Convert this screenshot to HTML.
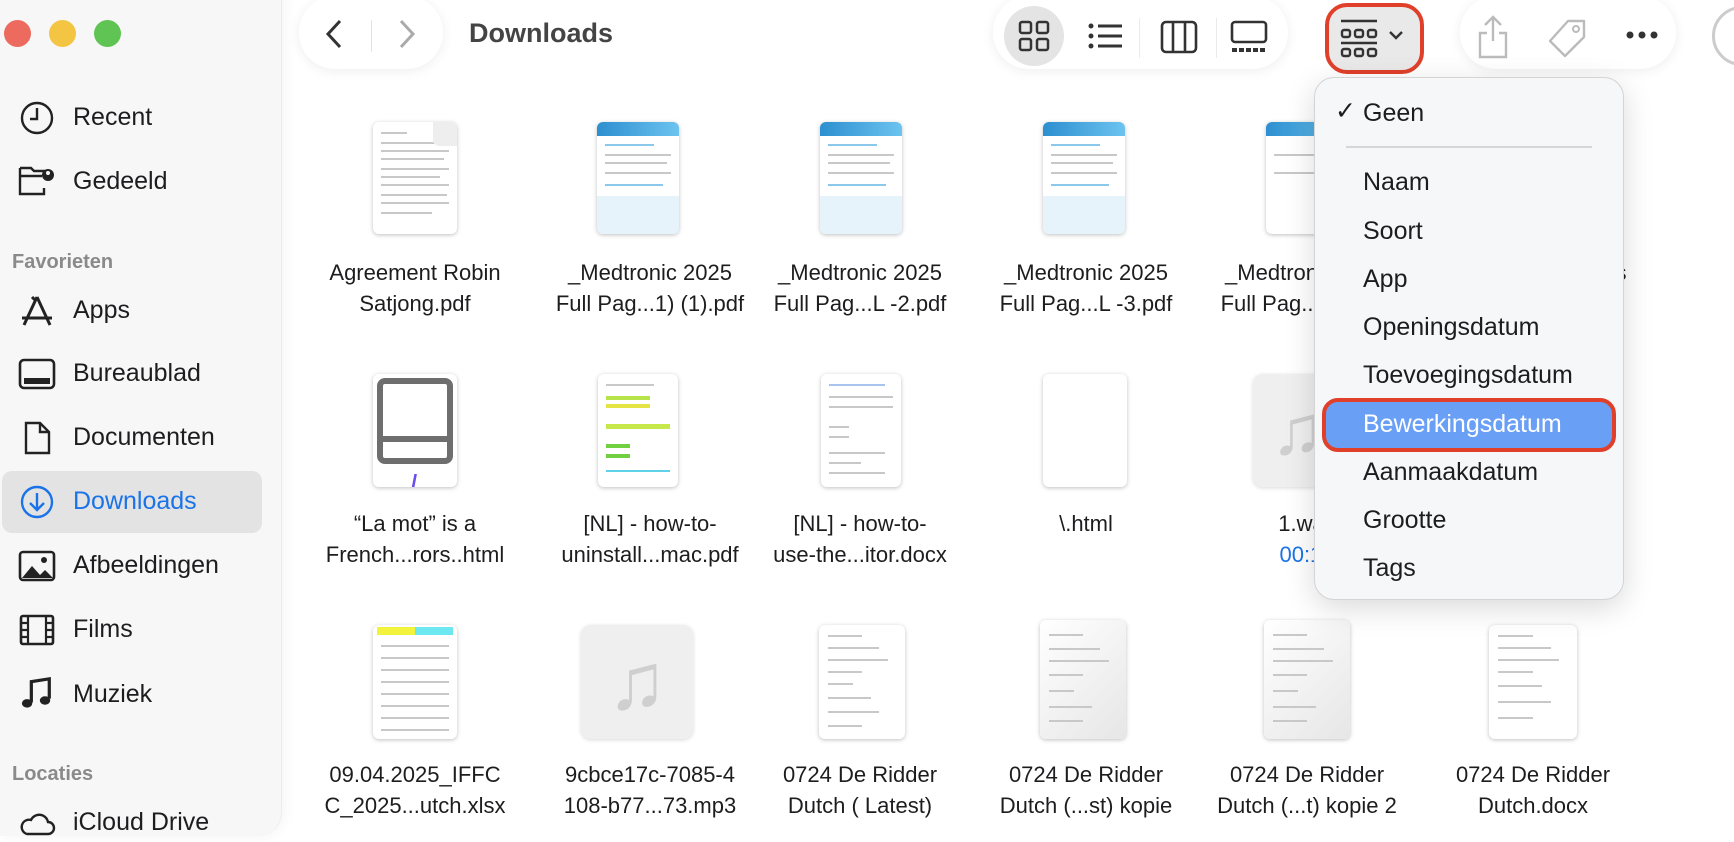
<!DOCTYPE html>
<html><head><meta charset="utf-8"><style>
*{margin:0;padding:0;box-sizing:border-box}
body{width:1734px;height:842px;overflow:hidden;background:#fff;font-family:"Liberation Sans",sans-serif;position:relative;color:#1d1d1f}
.abs{position:absolute}
#side{left:0;top:-20px;width:282px;height:856px;background:#f7f7f7;border-right:1px solid #ececec;border-radius:0 0 24px 0;box-shadow:2px 0 14px rgba(0,0,0,.05)}
#side>*{margin-top:20px}
.tl{position:absolute;top:20px;width:27px;height:27px;border-radius:50%}
.si{position:absolute;left:73px;font-size:25px;color:#1d1d1f}
.sic{position:absolute;left:18px;width:38px;height:34px}
.hd{position:absolute;left:12px;font-size:20px;color:#8a8a8a;font-weight:bold}
.pill{position:absolute;background:#fff;border-radius:36px;box-shadow:0 2px 12px rgba(0,0,0,.07)}
.lbl{position:absolute;width:220px;text-align:center;font-size:22px;line-height:31px;color:#1d1d1f;white-space:nowrap}
.doc{position:absolute;background:#fff;border-radius:6px;box-shadow:0 1px 4px rgba(0,0,0,.25);overflow:hidden}
.ln{position:absolute;left:10%;height:2px;background:#c8c8c8}
.med .hdr{position:absolute;left:0;top:0;right:0;height:14px;background:linear-gradient(90deg,#2d8fd0,#6cc3ef)}
.mus{position:absolute;background:#efefef;border-radius:10px;box-shadow:0 1px 4px rgba(0,0,0,.15);color:#cfcfcf;text-align:center}
#menu{left:1314px;top:77px;width:310px;height:523px;background:#f6f7f9;border:1px solid #d4d4d4;border-radius:20px;box-shadow:0 8px 30px rgba(0,0,0,.15)}
.mi{position:absolute;left:48px;font-size:25px;color:#1d1d1f}
</style></head><body>

<div id="side" class="abs">
 <div class="tl" style="left:4px;background:#ec6a5e"></div>
 <div class="tl" style="left:49px;background:#f4c542"></div>
 <div class="tl" style="left:94px;background:#5fc454"></div>

 <svg class="sic" style="top:101px" viewBox="0 0 38 34"><circle cx="19" cy="17" r="15" fill="none" stroke="#222" stroke-width="2.4"/><path d="M19 7v11h-7" fill="none" stroke="#222" stroke-width="2.4"/></svg>
 <div class="si" style="top:103px">Recent</div>
 <svg class="sic" style="top:164px" viewBox="0 0 38 34"><path d="M2 4h11l3 3h10v4M2 4v26h24v-6M2 12h22" fill="none" stroke="#222" stroke-width="2.4"/><circle cx="30" cy="11" r="6" fill="#222"/><circle cx="30" cy="9" r="2" fill="#f6f6f6"/></svg>
 <div class="si" style="top:167px">Gedeeld</div>
 <div class="hd" style="top:251px">Favorieten</div>
 <svg class="sic" style="top:294px" viewBox="0 0 38 34"><path d="M19 3l-13 28M19 3l13 28M4 24h30M14 3l4 4" fill="none" stroke="#222" stroke-width="3"/></svg>
 <div class="si" style="top:296px">Apps</div>
 <svg class="sic" style="top:357px" viewBox="0 0 38 34"><rect x="2" y="3" width="34" height="28" rx="4" fill="none" stroke="#222" stroke-width="2.6"/><rect x="6" y="21" width="26" height="6" fill="#222"/></svg>
 <div class="si" style="top:359px">Bureaublad</div>
 <svg class="sic" style="top:421px" viewBox="0 0 38 34"><path d="M8 2h14l9 9v21H8z M22 2v9h9" fill="none" stroke="#222" stroke-width="2.4"/></svg>
 <div class="si" style="top:423px">Documenten</div>
 <div class="abs" style="left:2px;top:471px;width:260px;height:62px;background:#e3e3e3;border-radius:10px"></div>
 <svg class="sic" style="top:485px" viewBox="0 0 38 34"><circle cx="19" cy="17" r="15" fill="none" stroke="#1a73e8" stroke-width="2.4"/><path d="M19 8v17M12 18l7 7 7-7" fill="none" stroke="#1a73e8" stroke-width="2.4"/></svg>
 <div class="si" style="top:487px;color:#1a73e8">Downloads</div>
 <svg class="sic" style="top:549px" viewBox="0 0 38 34"><rect x="2" y="3" width="34" height="28" rx="3" fill="none" stroke="#222" stroke-width="2.6"/><path d="M4 29l10-12 8 9 5-5 8 8z" fill="#222"/><circle cx="26" cy="11" r="3" fill="#222"/></svg>
 <div class="si" style="top:551px">Afbeeldingen</div>
 <svg class="sic" style="top:613px" viewBox="0 0 38 34"><rect x="3" y="3" width="32" height="28" rx="2" fill="none" stroke="#222" stroke-width="2.6"/><path d="M10 3v28M28 3v28M3 10h7M3 17h7M3 24h7M28 10h7M28 17h7M28 24h7" stroke="#222" stroke-width="2.2"/></svg>
 <div class="si" style="top:615px">Films</div>
 <svg class="sic" style="top:676px" viewBox="0 0 38 36"><path d="M13 28V6l19-3v21" fill="none" stroke="#222" stroke-width="3.4"/><ellipse cx="8.5" cy="29" rx="5.5" ry="4.5" fill="#222"/><ellipse cx="27.5" cy="26" rx="5.5" ry="4.5" fill="#222"/></svg>
 <div class="si" style="top:680px">Muziek</div>
 <div class="hd" style="top:763px">Locaties</div>
 <svg class="sic" style="top:806px" viewBox="0 0 38 34"><path d="M9 28h21a6 6 0 0 0 0-12 9 9 0 0 0-17-2 7 7 0 0 0-4 14z" fill="none" stroke="#222" stroke-width="2.4"/></svg>
 <div class="si" style="top:808px">iCloud Drive</div>
</div>

<!-- toolbar -->
<div class="pill" style="left:299px;top:-4px;width:144px;height:73px"></div>
<svg class="abs" style="left:322px;top:18px" width="24" height="32"><path d="M18 3L6 16l12 13" fill="none" stroke="#333" stroke-width="3"/></svg>
<div class="abs" style="left:371px;top:20px;width:1px;height:32px;background:#e2e2e2"></div>
<svg class="abs" style="left:395px;top:18px" width="24" height="32"><path d="M6 3l12 13L6 29" fill="none" stroke="#aaa" stroke-width="3"/></svg>
<div class="abs" style="left:469px;top:18px;font-size:27px;font-weight:bold;color:#444">Downloads</div>

<div class="pill" style="left:993px;top:-4px;width:295px;height:73px"></div>
<div class="abs" style="left:1004px;top:6px;width:60px;height:60px;border-radius:50%;background:#e4e4e4"></div>
<svg class="abs" style="left:1018px;top:20px" width="32" height="32"><g fill="none" stroke="#333" stroke-width="2.5"><rect x="2" y="2" width="11" height="11" rx="2"/><rect x="19" y="2" width="11" height="11" rx="2"/><rect x="2" y="19" width="11" height="11" rx="2"/><rect x="19" y="19" width="11" height="11" rx="2"/></g></svg>
<svg class="abs" style="left:1088px;top:22px" width="36" height="30"><g fill="#333"><circle cx="3" cy="4" r="2.5"/><circle cx="3" cy="14" r="2.5"/><circle cx="3" cy="24" r="2.5"/><rect x="10" y="2.5" width="24" height="3"/><rect x="10" y="12.5" width="24" height="3"/><rect x="10" y="22.5" width="24" height="3"/></g></svg>
<div class="abs" style="left:1139px;top:18px;width:1px;height:40px;background:#eaeaea"></div>
<svg class="abs" style="left:1160px;top:20px" width="38" height="34"><g fill="none" stroke="#333" stroke-width="2.6"><rect x="2" y="2" width="34" height="30" rx="4"/><path d="M13 2v30M25 2v30"/></g></svg>
<div class="abs" style="left:1216px;top:18px;width:1px;height:40px;background:#eaeaea"></div>
<svg class="abs" style="left:1230px;top:20px" width="40" height="36"><g fill="none" stroke="#333" stroke-width="2.6"><rect x="2" y="2" width="34" height="20" rx="3"/></g><g fill="#333"><rect x="2" y="28" width="5" height="4"/><rect x="9" y="28" width="5" height="4"/><rect x="16" y="28" width="5" height="4"/><rect x="23" y="28" width="5" height="4"/><rect x="30" y="28" width="5" height="4"/></g></svg>

<div class="abs" style="left:1325px;top:3px;width:99px;height:71px;border-radius:22px;border:4px solid #e0402a;background:#e9e9e9"></div>
<svg class="abs" style="left:1340px;top:18px" width="40" height="44"><g fill="none" stroke="#333" stroke-width="2.4"><path d="M1 3h36"/><rect x="2" y="12" width="8" height="7" rx="2"/><rect x="15" y="12" width="8" height="7" rx="2"/><rect x="28" y="12" width="8" height="7" rx="2"/><path d="M1 25h36"/><rect x="2" y="31" width="8" height="7" rx="2"/><rect x="15" y="31" width="8" height="7" rx="2"/><rect x="28" y="31" width="8" height="7" rx="2"/></g></svg>
<svg class="abs" style="left:1388px;top:30px" width="16" height="12"><path d="M2 2l6 6 6-6" fill="none" stroke="#333" stroke-width="2.4"/></svg>

<div class="pill" style="left:1460px;top:-4px;width:216px;height:73px"></div>
<svg class="abs" style="left:1476px;top:14px" width="34" height="46"><g fill="none" stroke="#bbb" stroke-width="2.4"><path d="M17 3v24M9 11l8-8 8 8M11 19H4v24h26V19h-7"/></g></svg>
<svg class="abs" style="left:1546px;top:18px" width="42" height="42"><path d="M22 3h16v16L19 38 4 23z" fill="none" stroke="#bbb" stroke-width="2.4" stroke-linejoin="round"/><circle cx="30" cy="11" r="3" fill="none" stroke="#bbb" stroke-width="2"/></svg>
<svg class="abs" style="left:1625px;top:30px" width="36" height="10"><g fill="#333"><circle cx="5" cy="5" r="3.5"/><circle cx="17" cy="5" r="3.5"/><circle cx="29" cy="5" r="3.5"/></g></svg>
<div class="abs" style="left:1712px;top:6px;width:60px;height:60px;border-radius:50%;border:3px solid #ccc;background:#fff"></div>

<!-- Row 1 -->
<div class="doc" style="left:373px;top:122px;width:84px;height:112px"><div class="ln" style="top:10px;width:30%"></div><div class="ln" style="top:20px;width:70%"></div><div class="ln" style="top:28px;width:80%"></div><div class="ln" style="top:36px;width:75%"></div><div class="ln" style="top:46px;width:80%"></div><div class="ln" style="top:54px;width:70%"></div><div class="ln" style="top:62px;width:80%"></div><div class="ln" style="top:72px;width:78%"></div><div class="ln" style="top:80px;width:80%"></div><div class="ln" style="top:90px;width:60%"></div><div class="abs" style="right:0;top:0;width:24px;height:24px;background:#eee;border-bottom-left-radius:6px"></div></div>
<div class="doc med" style="left:597px;top:122px;width:82px;height:112px"><div class="hdr"></div><div class="ln" style="top:22px;width:60%;background:#8cc8ec"></div><div class="ln" style="top:32px;width:80%"></div><div class="ln" style="top:40px;width:75%"></div><div class="ln" style="top:50px;width:80%"></div><div class="ln" style="top:62px;width:70%;background:#8cc8ec"></div><div class="abs" style="left:0;right:0;top:74px;height:38px;background:#e6f3fb"></div></div>
<div class="doc med" style="left:820px;top:122px;width:82px;height:112px"><div class="hdr"></div><div class="ln" style="top:22px;width:60%;background:#8cc8ec"></div><div class="ln" style="top:32px;width:80%"></div><div class="ln" style="top:40px;width:75%"></div><div class="ln" style="top:50px;width:80%"></div><div class="ln" style="top:62px;width:70%;background:#8cc8ec"></div><div class="abs" style="left:0;right:0;top:74px;height:38px;background:#e6f3fb"></div></div>
<div class="doc med" style="left:1043px;top:122px;width:82px;height:112px"><div class="hdr"></div><div class="ln" style="top:22px;width:60%;background:#8cc8ec"></div><div class="ln" style="top:32px;width:80%"></div><div class="ln" style="top:40px;width:75%"></div><div class="ln" style="top:50px;width:80%"></div><div class="ln" style="top:62px;width:70%;background:#8cc8ec"></div><div class="abs" style="left:0;right:0;top:74px;height:38px;background:#e6f3fb"></div></div>
<div class="doc med" style="left:1266px;top:122px;width:82px;height:112px"><div class="hdr"></div><div class="ln" style="top:32px;width:80%"></div><div class="ln" style="top:50px;width:80%"></div></div>

<div class="lbl" style="left:305px;top:257px">Agreement Robin<br>Satjong.pdf</div>
<div class="lbl" style="left:540px;top:257px">_Medtronic 2025<br>Full Pag...1) (1).pdf</div>
<div class="lbl" style="left:750px;top:257px">_Medtronic 2025<br>Full Pag...L -2.pdf</div>
<div class="lbl" style="left:976px;top:257px">_Medtronic 2025<br>Full Pag...L -3.pdf</div>
<div class="lbl" style="left:1197px;top:257px">_Medtronic 2025<br>Full Pag...L -4.pdf</div>
<div class="lbl" style="left:1423px;top:257px">Screen Recordings<br>Screenshots</div>

<!-- Row 2 -->
<div class="doc" style="left:373px;top:374px;width:84px;height:113px"><div class="abs" style="left:4px;top:4px;width:76px;height:86px;border:6px solid #6e6e6e;border-radius:8px"></div><div class="abs" style="left:4px;top:62px;width:76px;height:6px;background:#6e6e6e"></div><div class="abs" style="left:38px;top:96px;font-size:22px;color:#6b4cf0;font-weight:bold">/</div></div>
<div class="doc" style="left:598px;top:374px;width:80px;height:113px"><div class="ln" style="top:10px;width:60%"></div><div class="ln" style="top:22px;width:55%;height:4px;background:#b7e34a"></div><div class="ln" style="top:30px;width:55%;height:4px;background:#e6e445"></div><div class="ln" style="top:50px;width:80%;height:5px;background:#c7e84a"></div><div class="ln" style="top:70px;width:30%;height:4px;background:#70d040"></div><div class="ln" style="top:80px;width:30%;height:4px;background:#70d040"></div><div class="ln" style="top:96px;width:80%;background:#5ed2e6"></div></div>
<div class="doc" style="left:821px;top:374px;width:80px;height:113px"><div class="ln" style="top:10px;width:70%;background:#a8c4ee"></div><div class="ln" style="top:22px;width:80%"></div><div class="ln" style="top:32px;width:80%"></div><div class="ln" style="top:52px;width:25%"></div><div class="ln" style="top:62px;width:25%"></div><div class="ln" style="top:78px;width:70%"></div><div class="ln" style="top:88px;width:40%"></div><div class="ln" style="top:98px;width:70%"></div></div>
<div class="doc" style="left:1043px;top:374px;width:84px;height:113px"></div>
<div class="mus" style="left:1253px;top:374px;width:88px;height:113px;font-size:70px;line-height:113px">♫</div>

<div class="lbl" style="left:305px;top:508px">“La mot” is a<br>French...rors..html</div>
<div class="lbl" style="left:540px;top:508px">[NL] - how-to-<br>uninstall...mac.pdf</div>
<div class="lbl" style="left:750px;top:508px">[NL] - how-to-<br>use-the...itor.docx</div>
<div class="lbl" style="left:976px;top:508px">\.html</div>
<div class="lbl" style="left:1197px;top:508px">1.wav<br><span style="color:#1a73e8">00:12</span></div>
<div class="lbl" style="left:1423px;top:508px">Opname 2025-0<br>1 min 23</div>

<!-- Row 3 -->
<div class="doc" style="left:373px;top:625px;width:84px;height:114px"><div class="abs" style="left:4px;top:2px;width:38px;height:8px;background:#f3f23c"></div><div class="abs" style="left:42px;top:2px;width:38px;height:8px;background:#6ee8f0"></div><div class="ln" style="top:20px;width:80%"></div><div class="ln" style="top:32px;width:80%"></div><div class="ln" style="top:44px;width:80%"></div><div class="ln" style="top:56px;width:80%"></div><div class="ln" style="top:68px;width:80%"></div><div class="ln" style="top:80px;width:80%"></div><div class="ln" style="top:92px;width:80%"></div><div class="ln" style="top:104px;width:80%"></div></div>
<div class="mus" style="left:581px;top:625px;width:112px;height:114px;font-size:80px;line-height:114px">♫</div>
<div class="doc" style="left:819px;top:625px;width:86px;height:114px"><div class="ln" style="top:10px;width:40%"></div><div class="ln" style="top:22px;width:60%"></div><div class="ln" style="top:34px;width:70%"></div><div class="ln" style="top:46px;width:40%"></div><div class="ln" style="top:58px;width:30%"></div><div class="ln" style="top:72px;width:50%"></div><div class="ln" style="top:86px;width:60%"></div><div class="ln" style="top:100px;width:40%"></div></div>
<div class="doc" style="left:1040px;top:620px;width:86px;height:119px;background:linear-gradient(135deg,#fff,#e6e6e6)"><div class="ln" style="top:14px;width:40%"></div><div class="ln" style="top:28px;width:60%"></div><div class="ln" style="top:40px;width:70%"></div><div class="ln" style="top:54px;width:40%"></div><div class="ln" style="top:70px;width:30%"></div><div class="ln" style="top:86px;width:50%"></div><div class="ln" style="top:100px;width:40%"></div></div>
<div class="doc" style="left:1264px;top:620px;width:86px;height:119px;background:linear-gradient(135deg,#fff,#e6e6e6)"><div class="ln" style="top:14px;width:40%"></div><div class="ln" style="top:28px;width:60%"></div><div class="ln" style="top:40px;width:70%"></div><div class="ln" style="top:54px;width:40%"></div><div class="ln" style="top:70px;width:30%"></div><div class="ln" style="top:86px;width:50%"></div><div class="ln" style="top:100px;width:40%"></div></div>
<div class="doc" style="left:1489px;top:625px;width:88px;height:114px"><div class="ln" style="top:10px;width:40%"></div><div class="ln" style="top:22px;width:60%"></div><div class="ln" style="top:34px;width:70%"></div><div class="ln" style="top:46px;width:40%"></div><div class="ln" style="top:60px;width:50%"></div><div class="ln" style="top:76px;width:60%"></div><div class="ln" style="top:92px;width:40%"></div></div>

<div class="lbl" style="left:305px;top:759px">09.04.2025_IFFC<br>C_2025...utch.xlsx</div>
<div class="lbl" style="left:540px;top:759px">9cbce17c-7085-4<br>108-b77...73.mp3</div>
<div class="lbl" style="left:750px;top:759px">0724 De Ridder<br>Dutch ( Latest)</div>
<div class="lbl" style="left:976px;top:759px">0724 De Ridder<br>Dutch (...st) kopie</div>
<div class="lbl" style="left:1197px;top:759px">0724 De Ridder<br>Dutch (...t) kopie 2</div>
<div class="lbl" style="left:1423px;top:759px">0724 De Ridder<br>Dutch.docx</div>

<!-- Menu -->
<div id="menu" class="abs">
 <div class="abs" style="left:20px;top:18px;font-size:25px">✓</div>
 <div class="mi" style="top:21px">Geen</div>
 <div class="abs" style="left:31px;top:68px;width:246px;height:2px;background:#d6d6d8"></div>
 <div class="mi" style="top:90px">Naam</div>
 <div class="mi" style="top:139px">Soort</div>
 <div class="mi" style="top:187px">App</div>
 <div class="mi" style="top:235px">Openingsdatum</div>
 <div class="mi" style="top:283px">Toevoegingsdatum</div>
 <div class="abs" style="left:7px;top:320px;width:294px;height:54px;background:#6a9ff6;border:4px solid #e0402a;border-radius:16px"></div>
 <div class="mi" style="top:332px;color:#fff">Bewerkingsdatum</div>
 <div class="mi" style="top:380px">Aanmaakdatum</div>
 <div class="mi" style="top:428px">Grootte</div>
 <div class="mi" style="top:476px">Tags</div>
</div>
</body></html>
